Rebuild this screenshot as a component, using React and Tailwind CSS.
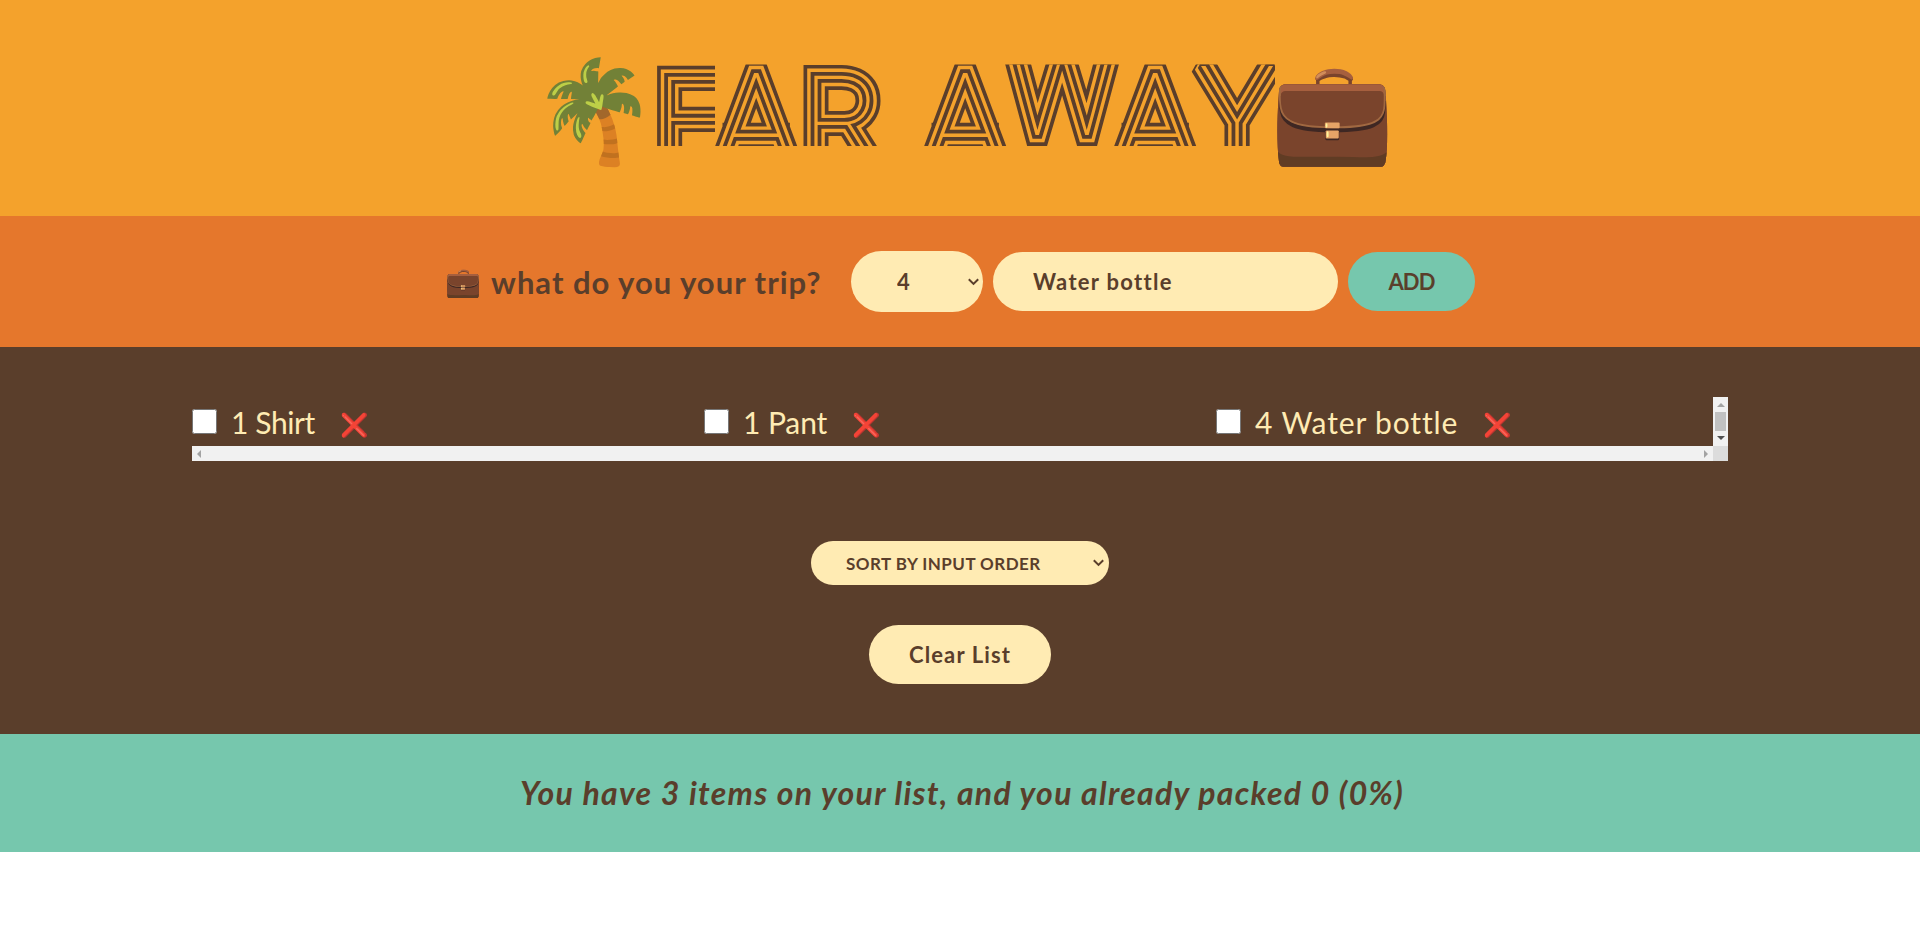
const letters = [
  { c: "F", x: 656, y: 164, size: 123, clip: [652, 63] },
  { c: "A", x: 718, y: 164, size: 128, clip: [700, 103] },
  { c: "R ", x: 803, y: 162, size: 120, clip: [803, 90] },
  { c: "A", x: 927, y: 164, size: 128, clip: [900, 120] },
  { c: "W", x: 1010, y: 135, size: 115, clip: [1000, 130] },
  { c: "A", x: 1117, y: 164, size: 128, clip: [1100, 110] },
  { c: "Y", x: 1199, y: 157, size: 128, clip: [1190, 85] },
];

const EMOJI = "font-['Noto_Color_Emoji',sans-serif]";

function Logo() {
  return (
    <svg className="h-[216px] w-[1920px] shrink-0" viewBox="0 0 1920 216">
      <defs>
        {letters.map((l, i) => (
          <clipPath key={i} id={"band" + i}>
            <rect x={l.clip[0]} y="64.5" width={l.clip[1]} height="81.5" />
          </clipPath>
        ))}
      </defs>
      <text x="532" y="146" fontSize="100" fontFamily="Noto Color Emoji">🌴</text>
      <g strokeMiterlimit="1.6">
        <use href="#title" fill="#5a3e2b" stroke="#5a3e2b" strokeWidth="21.8" />
        <use href="#title" fill="#f4a22c" stroke="#f4a22c" strokeWidth="14.4" />
        <use href="#title" fill="#5a3e2b" stroke="#5a3e2b" strokeWidth="7.6" />
        <g fill="#f4a22c" stroke="none">
          <g id="title" fontFamily="Roboto" fontWeight="100">
            {letters.map((l, i) => (
              <text key={i} x={l.x} y={l.y} fontSize={l.size} clipPath={"url(#band" + i + ")"}>{l.c}</text>
            ))}
          </g>
        </g>
      </g>
      <text x="1270" y="146" fontSize="100" fontFamily="Noto Color Emoji">💼</text>
    </svg>
  );
}

function Select({ label, box, text, chevron }) {
  return (
    <div className={"grid items-center " + box}>
      <select className={"col-start-1 row-start-1 h-full w-full appearance-none rounded-full bg-[#ffebb3] font-bold " + text}>
        <option>{label}</option>
      </select>
      <svg className={"pointer-events-none col-start-1 row-start-1 justify-self-end " + chevron} width="11" height="8" viewBox="0 0 11 8" fill="none" stroke="#5a3e2b" strokeWidth="2">
        <path d="M.8 1.2l4.7 4.7 4.7-4.7" />
      </svg>
    </div>
  );
}

function Item({ text, spacing }) {
  return (
    <li className="flex h-[49px] w-[512px] shrink-0 items-center">
      <input type="checkbox" className="h-[25px] w-[25px] shrink-0" />
      <span className={"ml-[14px] mt-px whitespace-nowrap text-[30px] text-[#ffebb3] [font-variant-ligatures:none] " + spacing}>{text}</span>
      <button className={"ml-[25px] mt-[8px] text-[23px] leading-none " + EMOJI}>❌</button>
    </li>
  );
}

export default function App() {
  return (
    <div className="w-full bg-white font-['Lato',sans-serif] text-[#5a3e2b] [font-variant-ligatures:none]">
      <h1 className="flex h-[216px] justify-center overflow-hidden bg-[#f4a22c]">
        <Logo />
      </h1>
      <form className="flex h-[131px] items-center bg-[#e5772c] pl-[445px]">
        <h3 className="flex w-[406px] items-center whitespace-nowrap text-[31px] font-bold">
          <span className={"mt-[3px] w-[46px] text-[29px] " + EMOJI}>💼</span>
          <span className="mt-px tracking-[1px]">what do you your trip?</span>
        </h3>
        <Select label="4" box="h-[61px] w-[132px]" text="pl-[46px] text-[22px]" chevron="mr-[4px]" />
        <input
          type="text"
          defaultValue="Water bottle"
          className="ml-[10px] h-[59px] w-[345px] rounded-full bg-[#ffebb3] px-[40px] text-[22px] font-bold tracking-[1.3px]"
        />
        <button className="ml-[10px] h-[59px] w-[127px] rounded-full bg-[#76c7ad] text-[22px] font-bold tracking-[-0.9px]">ADD</button>
      </form>
      <section className="flex h-[387px] flex-col items-center bg-[#5a3e2b] pt-[50px]">
        <div className="flex w-[1536px]">
          <div className="w-[1521px]">
            <ul className="flex h-[49px] overflow-hidden">
              <Item text="1 Shirt" spacing="tracking-[-0.4px]" />
              <Item text="1 Pant" spacing="tracking-[-0.1px]" />
              <Item text="4 Water bottle" spacing="tracking-[0.85px]" />
            </ul>
            <div className="flex h-[15px] items-center justify-between bg-[#f1f1f1] px-[5px]">
              <svg width="4" height="8" viewBox="0 0 4 8"><path d="M4 0v8L0 4z" fill="#a3a3a3" /></svg>
              <svg width="4" height="8" viewBox="0 0 4 8"><path d="M0 0v8l4-4z" fill="#a3a3a3" /></svg>
            </div>
          </div>
          <div className="w-[15px]">
            <div className="flex h-[49px] flex-col items-center bg-[#f1f1f1] pt-[6px]">
              <svg width="8" height="4" viewBox="0 0 8 4"><path d="M0 4h8L4 0z" fill="#a3a3a3" /></svg>
              <div className="mt-[5px] h-[19px] w-[11px] bg-[#c1c1c1]" />
              <svg className="mt-[5px]" width="8" height="4" viewBox="0 0 8 4"><path d="M0 0h8L4 4z" fill="#505050" /></svg>
            </div>
            <div className="h-[15px] bg-[#dcdcdc]" />
          </div>
        </div>
        <Select label="SORT BY INPUT ORDER" box="mt-[80px] h-[44px] w-[298px]" text="pl-[35px] pt-px text-[17px] tracking-[0.45px]" chevron="mr-[5px]" />
        <button className="mt-[40px] h-[59px] w-[182px] rounded-full bg-[#ffebb3] text-[22px] font-bold tracking-[1.1px]">Clear List</button>
      </section>
      <footer className="flex h-[118px] items-center justify-center bg-[#76c7ad]">
        <em className="ml-[4px] whitespace-nowrap text-[32px] font-bold tracking-[1.29px]">
          You have 3 items on your list, and you already packed 0 (0%)
        </em>
      </footer>
    </div>
  );
}
